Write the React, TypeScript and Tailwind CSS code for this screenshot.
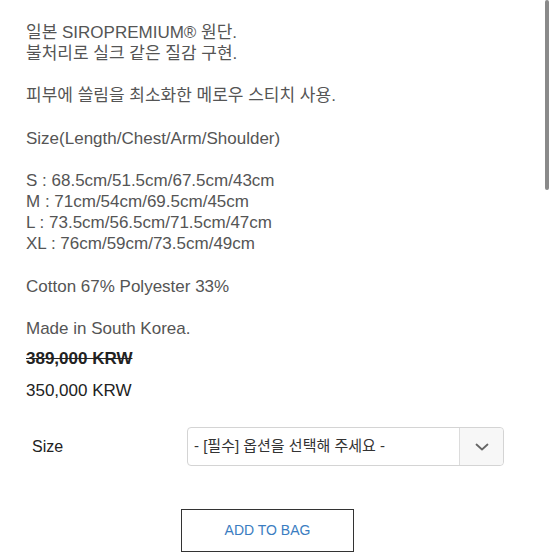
import React from "react";

const lines: string[] = [
  "일본 SIROPREMIUM® 원단.",
  "불처리로 실크 같은 질감 구현.",
  "",
  "피부에 쓸림을 최소화한 메로우 스티치 사용.",
  "",
  "Size(Length/Chest/Arm/Shoulder)",
  "",
  "S : 68.5cm/51.5cm/67.5cm/43cm",
  "M : 71cm/54cm/69.5cm/45cm",
  "L : 73.5cm/56.5cm/71.5cm/47cm",
  "XL : 76cm/59cm/73.5cm/49cm",
  "",
  "Cotton 67% Polyester 33%",
  "",
  "Made in South Korea.",
];

export default function App() {
  return (
    <div
      className="relative w-[554px] h-[554px] overflow-hidden bg-white"
      style={{ fontFamily: '"Liberation Sans", Arial, "Noto Sans CJK KR", sans-serif' }}
    >
      <div className="pl-[26px] pt-[22px]">
        <div className="text-[17px] leading-[21.15px] text-[#555555]">
          {lines.map((l, i) => (
            <div key={i} className="h-[21.15px] whitespace-nowrap">
              {l}
            </div>
          ))}
        </div>
        <div className="mt-[9px] h-[21px] leading-[21px] text-[17px] font-bold text-[#222] line-through">
          389,000 KRW
        </div>
        <div className="mt-[11px] h-[21px] leading-[21px] text-[17px] text-[#222]">
          350,000 KRW
        </div>
      </div>
      <div className="mt-[26px] flex items-center">
        <div className="w-[187px] pl-[32px] text-[16px] text-[#222]">Size</div>
        <div className="flex h-[39px] w-[317px] items-stretch rounded-[4px] border border-[#d4d4d4] bg-white">
          <div className="flex flex-1 items-center pl-[6px] text-[15px] text-[#333]">
            - [필수] 옵션을 선택해 주세요 -
          </div>
          <div className="flex w-[44px] items-center justify-center rounded-r-[4px] border-l border-[#dcdcdc] bg-[#f7f7f7]">
            <svg width="16" height="10" viewBox="0 0 16 10" fill="none">
              <path d="M2.5 2.5l5.5 5 5.5-5" stroke="#666" strokeWidth="1.8" strokeLinecap="round" strokeLinejoin="round" />
            </svg>
          </div>
        </div>
      </div>
      <div className="mt-[43px] flex pl-[181px]">
        <div className="flex h-[43px] w-[173px] items-center justify-center border-[1.5px] border-[#333] bg-white text-[14px] text-[#3a7dc1]">
          ADD TO BAG
        </div>
      </div>
      <div className="absolute right-[5px] top-0 h-[190px] w-[4px] rounded-full bg-[#8a8a8a]" />
    </div>
  );
}
